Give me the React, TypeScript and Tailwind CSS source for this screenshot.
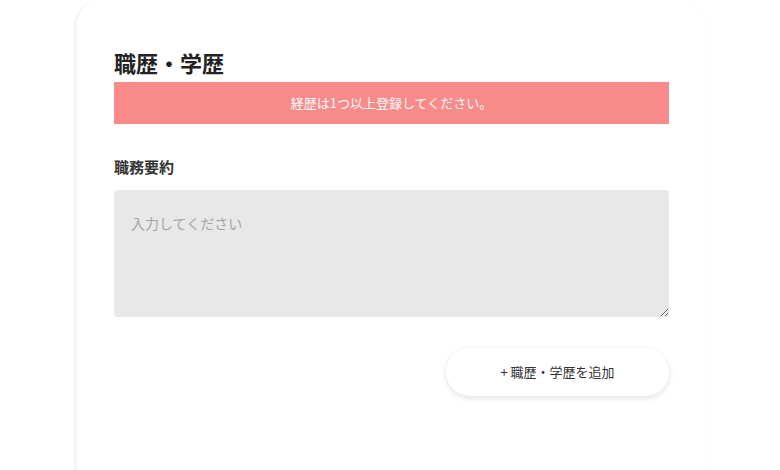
export default function App() {
  return (
    <div
      className="h-[470px] w-[780px] overflow-hidden bg-white text-[#333]"
      style={{ fontFamily: '"Noto Sans CJK JP", "Noto Sans", sans-serif' }}
    >
      <div className="ml-[74px] h-[500px] w-[631px] rounded-tl-[26px] rounded-tr-[26px] border-l-[3px] border-[#f5f5f5] bg-white pl-[37px] pr-9 pt-[44px] shadow-[1px_0_2px_rgba(0,0,0,0.02)]">
        <h2 className="text-[22px] font-bold leading-[36px] text-[#222]">職歴・学歴</h2>
        <div className="mt-[2px] flex h-[42px] items-center justify-center bg-[#f98a8a] text-[13px] text-white">
          経歴は1つ以上登録してください。
        </div>

        <label className="mt-[31px] block text-[15px] font-bold leading-[24px] text-[#333]">職務要約</label>
        <textarea
          placeholder="入力してください"
          className="mt-[11px] block h-[127px] w-full rounded-[4px] bg-[#e8e8e8] px-[17px] py-[21px] text-[14px] leading-[24px] text-[#333] outline-none placeholder:text-[#a3a3a3]"
        />

        <div className="mt-[31px] flex justify-end">
          <button
            type="button"
            className="flex h-[48px] w-[223px] items-center justify-center rounded-full bg-white text-[13px] text-[#333] shadow-[0_2px_6px_rgba(0,0,0,0.12)]"
          >
            + 職歴・学歴を追加
          </button>
        </div>
      </div>
    </div>
  );
}
